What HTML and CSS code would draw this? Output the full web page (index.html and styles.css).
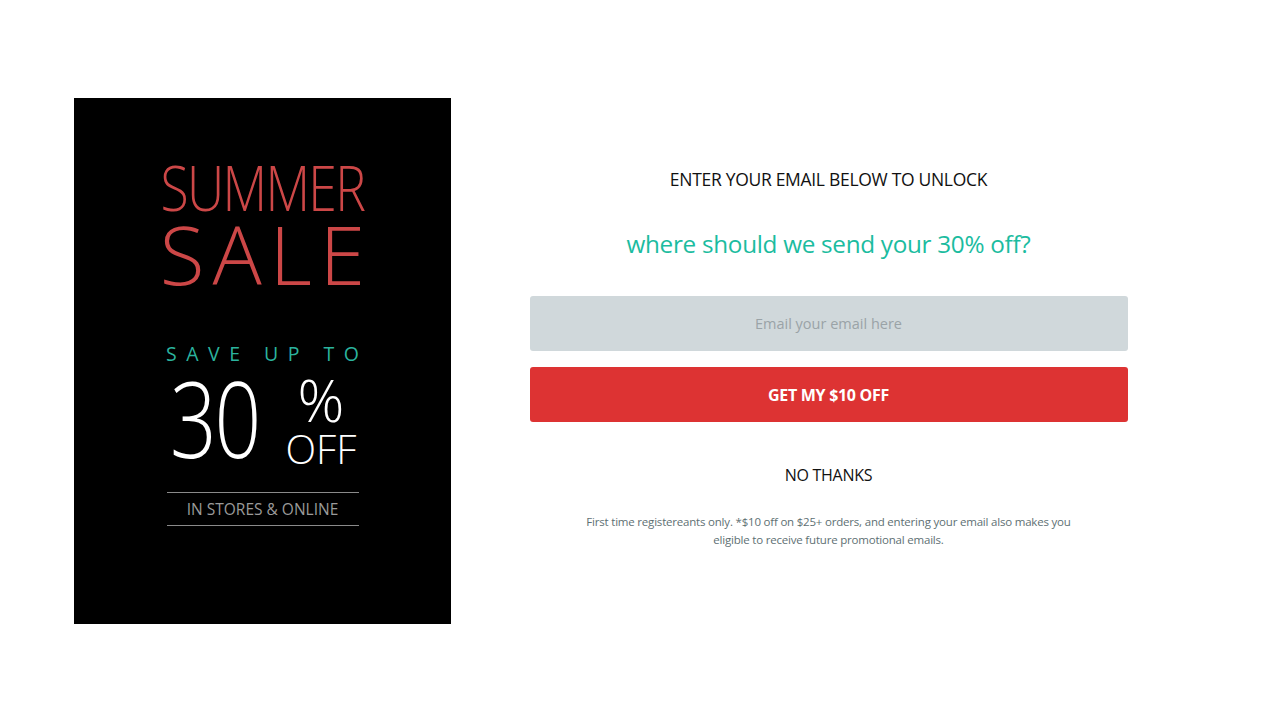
FILE: index.html
```html
<!DOCTYPE html>
<html lang="en">
<head>
    <meta charset="UTF-8">
    <meta name="viewport" content="width=device-width, initial-scale=1.0">
    <title>Summer Sale</title>
    <link rel="stylesheet" href="styles.css">
</head>
<body>
    <div class="popup">
        <div class="promo">
            <div class="promo-title">
                <span class="summer">SUMMER</span>
                <span class="sale">SALE</span>
            </div>
            <p class="save">SAVE UP TO</p>
            <div class="discount">
                <span class="amount">30</span>
                <span class="unit">
                    <span class="percent">%</span>
                    <span class="off">OFF</span>
                </span>
            </div>
            <p class="where">IN STORES &amp; ONLINE</p>
        </div>
        <div class="signup">
            <div class="form">
                <h2>ENTER YOUR EMAIL BELOW TO UNLOCK</h2>
                <h3>where should we send your 30% off?</h3>
                <input class="email" type="email" placeholder="Email your email here">
                <button class="button">GET MY $10 OFF</button>
                <a class="decline" href="#">NO THANKS</a>
                <p class="terms">First time registereants only. *$10 off on $25+ orders, and entering your email also makes you eligible to receive future promotional emails.</p>
            </div>
        </div>
    </div>
</body>
</html>
```

FILE: styles.css
```css
body {
    background-color: white;
    margin: 0;
    font-family: "Open Sans", "Noto Sans", sans-serif;
}
.popup {
    display: flex;
    height: 720px;
    padding: 98px 74px 96px;
    box-sizing: border-box;
}

/* left: black sale poster */
.promo {
    width: 377px;
    background-color: black;
    display: flex;
    flex-direction: column;
    align-items: center;
    padding-top: 57px;
    box-sizing: border-box;
}
.promo-title {
    display: flex;
    flex-direction: column;
    align-items: center;
    color: #cc4747;
    font-weight: 300;
}
.summer {
    display: block;
    font-size: 63px;
    line-height: 63px;
    letter-spacing: -2px;
    margin-right: 1px;
    transform: scaleX(0.82);
}
.sale {
    display: block;
    font-size: 82px;
    line-height: 70px;
    letter-spacing: 8px;
    padding-left: 8px;
}
.save {
    margin: 54px 0 0 0;
    color: #2bb39e;
    font-size: 19.5px;
    line-height: 24px;
    letter-spacing: 9.5px;
    padding-left: 9.5px;
}
.discount {
    display: flex;
    align-items: flex-start;
    color: white;
    font-weight: 300;
    margin-top: 12px;
    margin-right: 24px;
}
.amount {
    display: block;
    font-size: 105px;
    line-height: 80px;
    letter-spacing: -3px;
    transform: scaleX(0.78);
    transform-origin: right center;
}
.unit {
    display: flex;
    flex-direction: column;
    align-items: center;
    margin-left: 27px;
}
.percent {
    font-size: 58px;
    line-height: 44px;
}
.off {
    font-size: 40px;
    line-height: 54px;
}
.where {
    margin: 16px 0 0 0;
    width: 192px;
    border-top: 1px solid #8a8a8a;
    border-bottom: 1px solid #8a8a8a;
    color: #9a9a9a;
    font-size: 15.5px;
    line-height: 32px;
    text-align: center;
}

/* right: email form */
.signup {
    flex: 1;
    display: flex;
    justify-content: center;
}
.form {
    width: 598px;
    display: flex;
    flex-direction: column;
    align-items: center;
    padding-top: 69px;
}
h2 {
    margin: 0;
    font-size: 17.5px;
    font-weight: 400;
    color: #111;
    letter-spacing: -0.3px;
}
h3 {
    margin: 36px 0 0 0;
    font-size: 24.3px;
    font-weight: 400;
    color: #1bbc9f;
    letter-spacing: -0.3px;
}
.email {
    margin-top: 36px;
    width: 100%;
    height: 55px;
    box-sizing: border-box;
    border: none;
    border-radius: 3px;
    background-color: #d0d8db;
    text-align: center;
    font-family: inherit;
    font-size: 14.5px;
    color: #333;
}
.email::placeholder {
    color: #9aa3a7;
}
.button {
    margin-top: 16px;
    width: 100%;
    height: 55px;
    border: none;
    border-radius: 3px;
    background-color: #dd3333;
    color: white;
    font-family: inherit;
    font-size: 16px;
    font-weight: 700;
    letter-spacing: -0.3px;
    cursor: pointer;
}
.decline {
    margin-top: 42px;
    color: #111;
    font-size: 16px;
    text-decoration: none;
    letter-spacing: -0.3px;
}
.terms {
    margin: 27px 0 0 0;
    width: 500px;
    text-align: center;
    font-size: 11.5px;
    line-height: 18px;
    color: #5e7073;
    letter-spacing: -0.2px;
}
```
